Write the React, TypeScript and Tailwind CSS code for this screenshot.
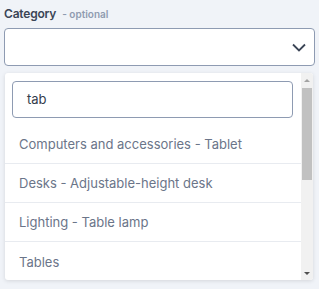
import React from "react";

export default function App() {
  const options = [
    "Computers and accessories - Tablet",
    "Desks - Adjustable-height desk",
    "Lighting - Table lamp",
    "Tables",
  ];
  return (
    <div
      className="w-[319px] h-[289px] bg-[#f0f3f8] overflow-hidden"
      style={{ fontFamily: "Inter, 'Noto Sans', sans-serif" }}
    >
      <div className="px-[4px] pt-[4px]">
        <div className="flex items-baseline gap-[6px] h-[18px] pt-[1px]">
          <span className="text-[12px] font-semibold text-[#3b4556] tracking-[-0.2px]">Category</span>
          <span className="text-[10px] font-semibold text-[#8f9bb0]">- optional</span>
        </div>
        <div className="mt-[6px] h-[38px] w-[311px] bg-white border border-[#8e9bb2] rounded-[4px] flex items-center justify-end pr-[8px]">
          <svg width="14" height="9" viewBox="0 0 14 9" fill="none">
            <path d="M1 1.5 L7 7.5 L13 1.5" stroke="#3b4556" strokeWidth="1.8" />
          </svg>
        </div>
        <div className="relative mt-[7px] ml-[1px] w-[308px] h-[207px] bg-white rounded-[3px] shadow-[0_1px_4px_rgba(0,0,0,0.12)] overflow-hidden">
          <div className="w-[296px]">
            <div className="pt-[8px] pb-[7px] pl-[7px] pr-[8px]">
              <div className="h-[37px] border border-[#8e9bb2] rounded-[4px] flex items-center pl-[14px] pt-[1px] text-[13px] text-[#333c4b]">
                tab
              </div>
            </div>
            {options.map((o, i) => (
              <div
                key={o}
                className={`h-[39px] flex items-center pl-[14px] pt-[2px] text-[13px] text-[#6b7589] ${i < options.length - 1 ? "border-b border-[#e8ebf0]" : ""}`}
              >
                {o}
              </div>
            ))}
          </div>
          <div className="absolute right-0 top-0 bottom-0 w-[12px] bg-[#f1f1f1] flex flex-col items-center">
            <div className="h-[15px] flex items-center justify-center">
              <div className="w-0 h-0 border-l-[3px] border-r-[3px] border-b-[3px] border-l-transparent border-r-transparent border-b-[#a3a3a3]" />
            </div>
            <div className="w-[10px] h-[92px] bg-[#c1c1c1]" />
            <div className="flex-1" />
            <div className="h-[14px] flex items-center justify-center">
              <div className="w-0 h-0 border-l-[3px] border-r-[3px] border-t-[3px] border-l-transparent border-r-transparent border-t-[#505050]" />
            </div>
          </div>
        </div>
      </div>
    </div>
  );
}
